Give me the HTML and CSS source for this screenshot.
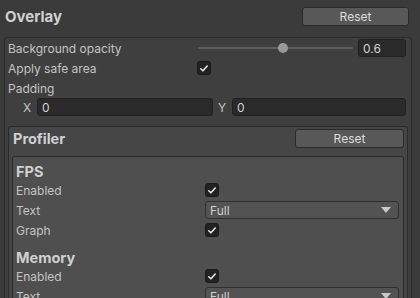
FILE: index.html
```html
<!DOCTYPE html>
<html>
<head>
<meta charset="utf-8">
<link rel="stylesheet" href="styles.css">
</head>
<body>
<div class="header">
  <div class="title">Overlay</div>
  <div class="btn btn-top">Reset</div>
</div>
<div class="box overlay">
  <div class="row">
    <div class="label">Background opacity</div>
    <div class="control slider-ctl">
      <div class="slider"><div class="track"></div><div class="thumb"></div></div>
      <div class="field value">0.6</div>
    </div>
  </div>
  <div class="row">
    <div class="label">Apply safe area</div>
    <div class="control"><div class="check"><svg viewBox="0 0 13 13" width="13" height="13"><path d="M3 6.8 L5.3 9 L10 3.8" fill="none" stroke="#e6e6e6" stroke-width="1.7" stroke-linecap="round" stroke-linejoin="round"/></svg></div></div>
  </div>
  <div class="row">
    <div class="label">Padding</div>
  </div>
  <div class="row xy">
    <span class="axis ax-x">X</span><div class="field fx">0</div>
    <span class="axis ax-y">Y</span><div class="field fy">0</div>
  </div>
  <div class="box profiler">
    <div class="sub-header">
      <div class="title">Profiler</div>
      <div class="btn btn-prof">Reset</div>
    </div>
    <div class="box section">
      <div class="sec-title first">FPS</div>
      <div class="row">
        <div class="label">Enabled</div>
        <div class="control"><div class="check"><svg viewBox="0 0 13 13" width="13" height="13"><path d="M3 6.8 L5.3 9 L10 3.8" fill="none" stroke="#e6e6e6" stroke-width="1.7" stroke-linecap="round" stroke-linejoin="round"/></svg></div></div>
      </div>
      <div class="row">
        <div class="label">Text</div>
        <div class="control"><div class="dropdown"><span>Full</span><svg class="arrow" viewBox="0 0 10 6" width="10" height="6"><path d="M0 0 H10 L5 6 Z" fill="#c8c8c8"/></svg></div></div>
      </div>
      <div class="row">
        <div class="label">Graph</div>
        <div class="control"><div class="check"><svg viewBox="0 0 13 13" width="13" height="13"><path d="M3 6.8 L5.3 9 L10 3.8" fill="none" stroke="#e6e6e6" stroke-width="1.7" stroke-linecap="round" stroke-linejoin="round"/></svg></div></div>
      </div>
      <div class="sec-title">Memory</div>
      <div class="row">
        <div class="label">Enabled</div>
        <div class="control"><div class="check"><svg viewBox="0 0 13 13" width="13" height="13"><path d="M3 6.8 L5.3 9 L10 3.8" fill="none" stroke="#e6e6e6" stroke-width="1.7" stroke-linecap="round" stroke-linejoin="round"/></svg></div></div>
      </div>
      <div class="row">
        <div class="label">Text</div>
        <div class="control"><div class="dropdown"><span>Full</span><svg class="arrow" viewBox="0 0 10 6" width="10" height="6"><path d="M0 0 H10 L5 6 Z" fill="#c8c8c8"/></svg></div></div>
      </div>
    </div>
  </div>
</div>
</body>
</html>
```
FILE: styles.css
```css
html, body {
  margin: 0;
  padding: 0;
  background: #3b3b3b;
  font-family: Inter, "Noto Sans", sans-serif;
  font-size: 12px;
  color: #c4c4c4;
  overflow: hidden;
  height: 298px;
}

.header {
  display: flex;
  justify-content: space-between;
  align-items: center;
  height: 19px;
  padding: 7px 11px 0 5px;
}

.title {
  font-size: 15px;
  font-weight: 700;
  color: #d0d0d0;
  line-height: 17px;
}

.btn {
  box-sizing: border-box;
  height: 19px;
  background: #585858;
  border: 1px solid #2a2a2a;
  border-radius: 3px;
  color: #dcdcdc;
  font-size: 12px;
  display: flex;
  align-items: center;
  justify-content: center;
}

.btn-top { width: 107px; }
.btn-prof { width: 109px; }

.box {
  border: 1px solid #2a2a2a;
  border-radius: 3px;
}

.overlay {
  margin: 11px 0 0 4px;
  width: 400px;
  padding: 0 3px;
  background: #3f3f3f;
  height: 400px;
}

.row {
  display: flex;
  align-items: center;
  height: 20px;
}

.label {
  width: 189px;
  flex: none;
  white-space: nowrap;
}

.control {
  flex: 1;
  display: flex;
  align-items: center;
}

.slider-ctl { gap: 5px; }

.slider {
  position: relative;
  width: 156px;
  height: 18px;
}

.track {
  position: absolute;
  left: 1px;
  right: 0;
  top: 8px;
  height: 2px;
  background: #5e5e5e;
  border-radius: 1px;
}

.thumb {
  position: absolute;
  left: 81px;
  top: 4px;
  width: 10px;
  height: 10px;
  border-radius: 50%;
  background: #999999;
}

.field {
  box-sizing: border-box;
  height: 18px;
  background: #2a2a2a;
  border: 1px solid #212121;
  border-radius: 3px;
  color: #d2d2d2;
  padding-left: 4px;
  display: flex;
  align-items: center;
}

.value { width: 48px; }

.check {
  box-sizing: border-box;
  width: 14px;
  height: 14px;
  background: #222222;
  border: 1px solid #1a1a1a;
  border-radius: 3px;
  display: flex;
  align-items: center;
  justify-content: center;
}

.check svg { display: block; }

.xy {
  height: 18px;
  margin-bottom: 10px;
}

.axis { color: #c4c4c4; }
.ax-x { margin-left: 15px; width: 14px; }
.ax-y { margin-left: 5px; width: 14px; }
.fx { width: 176px; }
.fy { width: 174px; }

.profiler {
  background: #464646;
  padding: 0 3px;
  height: 300px;
}

.sub-header {
  display: flex;
  justify-content: space-between;
  align-items: center;
  padding: 2px 0 0 0;
  margin-bottom: 8px;
  height: 19px;
}

.sub-header .title {
  padding-left: 1px;
  font-size: 14.5px;
}

.section {
  background: #4f4f4f;
  padding: 0 4px 0 3px;
  height: 300px;
}

.sec-title {
  font-size: 14.5px;
  font-weight: 700;
  color: #d0d0d0;
  line-height: 17px;
  padding-top: 9px;
}

.sec-title.first { padding-top: 6px; }

.dropdown {
  box-sizing: border-box;
  flex: 1;
  height: 18px;
  background: #535353;
  border: 1px solid #303030;
  border-radius: 3px;
  color: #d0d0d0;
  display: flex;
  align-items: center;
  justify-content: space-between;
  padding: 0 7px 0 4px;
}

.arrow { display: block; }
```
